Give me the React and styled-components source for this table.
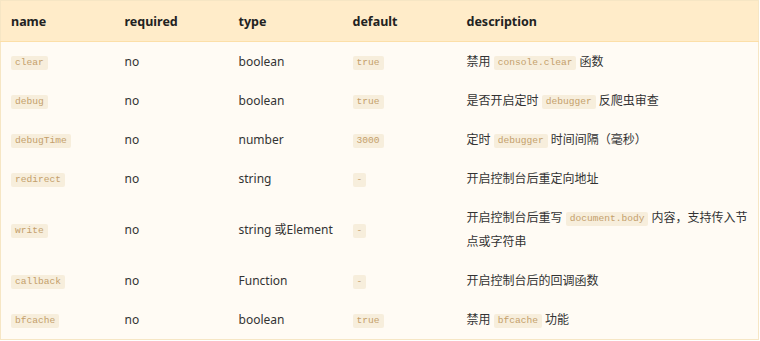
import React from "react";
import styled, { createGlobalStyle } from "styled-components";

const Global = createGlobalStyle`
	html, body {
		margin: 0;
		padding: 0;
		background: #ffffff;
	}
	body {
		font-family: "Noto Sans", "Noto Sans CJK SC", sans-serif;
		color: #333;
	}
`;

const rows = [
	{ name: "clear", type: "boolean", def: "true", desc: ["禁用 ", { code: "console.clear" }, " 函数"] },
	{ name: "debug", type: "boolean", def: "true", desc: ["是否开启定时 ", { code: "debugger" }, " 反爬虫审查"] },
	{ name: "debugTime", type: "number", def: "3000", desc: ["定时 ", { code: "debugger" }, " 时间间隔（毫秒）"] },
	{ name: "redirect", type: "string", def: "-", desc: ["开启控制台后重定向地址"] },
	{
		name: "write",
		type: "string 或Element",
		def: "-",
		desc: ["开启控制台后重写 ", { code: "document.body" }, " 内容，支持传入节", { br: true }, "点或字符串"],
	},
	{ name: "callback", type: "Function", def: "-", desc: ["开启控制台后的回调函数"] },
	{ name: "bfcache", type: "boolean", def: "true", desc: ["禁用 ", { code: "bfcache" }, " 功能"] },
];

const renderPart = (part, i) => {
	if (typeof part === "string") return <span key={i}>{part}</span>;
	if (part.br) return <br key={i} />;
	return <Code key={i}>{part.code}</Code>;
};

const App = () => {
	return (
		<>
			<Global />
			<Table>
				<colgroup>
					<col style={{ width: 114 }} />
					<col style={{ width: 114 }} />
					<col style={{ width: 114 }} />
					<col style={{ width: 114 }} />
					<col />
				</colgroup>
				<thead>
					<tr>
						<Th>name</Th>
						<Th>required</Th>
						<Th>type</Th>
						<Th>default</Th>
						<Th>description</Th>
					</tr>
				</thead>
				<tbody>
					{rows.map((r) => (
						<tr key={r.name}>
							<Td>
								<Code>{r.name}</Code>
							</Td>
							<Td>no</Td>
							<Td $nowrap>{r.type}</Td>
							<Td>
								<Code>{r.def}</Code>
							</Td>
							<Td $nowrap>{r.desc.map(renderPart)}</Td>
						</tr>
					))}
				</tbody>
			</Table>
		</>
	);
};

export default App;

const Table = styled.table`
	width: 759px;
	border-collapse: collapse;
	table-layout: fixed;
	background: #fffbf4;
	border: 1px solid #f6e6c4;
	font-size: 12px;
`;

const Th = styled.th`
	background: #ffecc9;
	border-bottom: 1px solid #fcdfa8;
	text-align: left;
	font-weight: 700;
	font-size: 12.5px;
	padding: 0 10px;
	height: 40px;
	color: #222;
`;

const Td = styled.td`
	padding: 8px 10px 7px;
	line-height: 24px;
	height: 24px;
	vertical-align: middle;
	color: #333;
	white-space: ${(p) => (p.$nowrap ? "nowrap" : "normal")};
`;

const Code = styled.code`
	display: inline-block;
	font-family: "Liberation Mono", "DejaVu Sans Mono", monospace;
	font-size: 9.6px;
	line-height: 14px;
	padding: 0 4px;
	border-radius: 2px;
	background: #f7eedc;
	color: #c49f6b;
	vertical-align: middle;
`;
